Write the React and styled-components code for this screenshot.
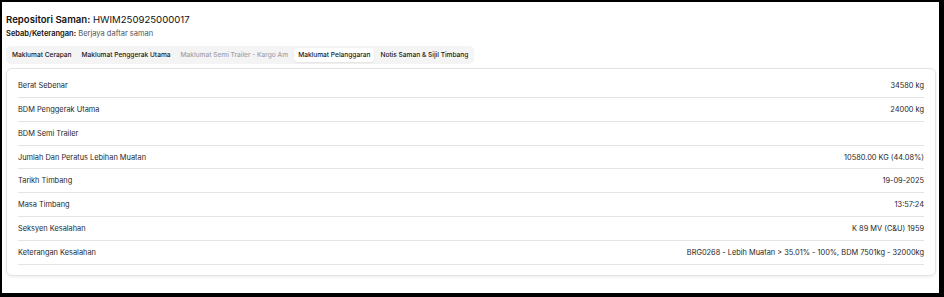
import React from "react";
import styled, { createGlobalStyle } from "styled-components";

const rows = [
  ["Berat Sebenar", "34580 kg"],
  ["BDM Penggerak Utama", "24000 kg"],
  ["BDM Semi Trailer", ""],
  ["Jumlah Dan Peratus Lebihan Muatan", "10580.00 KG (44.08%)"],
  ["Tarikh Timbang", "19-09-2025"],
  ["Masa Timbang", "13:57:24"],
  ["Seksyen Kesalahan", "K 89 MV (C&U) 1959"],
  ["Keterangan Kesalahan", "BRG0268 - Lebih Muatan > 35.01% - 100%, BDM 7501kg - 32000kg"],
];

const tabs = [
  { label: "Maklumat Cerapan" },
  { label: "Maklumat Penggerak Utama" },
  { label: "Maklumat Semi Trailer - Kargo Am", disabled: true },
  { label: "Maklumat Pelanggaran", active: true },
  { label: "Notis Saman & Sijil Timbang" },
];

export default function App() {
  return (
    <>
      <Global />
      <Frame>
        <Header>
          <Title>
            <b>Repositori Saman:</b> HWIM250925000017
          </Title>
          <Sub>
            <b>Sebab/Keterangan:</b> <span>Berjaya daftar saman</span>
          </Sub>
        </Header>
        <TabList>
          {tabs.map((t) => (
            <Tab key={t.label} $active={t.active} $disabled={t.disabled}>
              {t.label}
            </Tab>
          ))}
        </TabList>
        <Card>
          {rows.map(([k, v]) => (
            <Row key={k}>
              <span>{k}</span>
              <span>{v}</span>
            </Row>
          ))}
        </Card>
      </Frame>
    </>
  );
}

const Global = createGlobalStyle`
  html, body {
    margin: 0;
    padding: 0;
    background: #000;
  }
  body {
    font-family: Inter, "Liberation Sans", sans-serif;
    color: #18181b;
  }
`;

const Frame = styled.div`
  box-sizing: border-box;
  width: 944px;
  height: 297px;
  background: #fff;
  border-style: solid;
  border-color: #000;
  border-width: 2px 5px 4px 2px;
  padding: 11px 3px 0 4px;
  display: flex;
  flex-direction: column;
`;

const Header = styled.div`
  display: flex;
  flex-direction: column;
  gap: 3px;
  padding-bottom: 7px;
`;

const Title = styled.div`
  font-size: 9.6px;
  line-height: 13px;
  color: #111;
  b {
    font-weight: 600;
  }
`;

const Sub = styled.div`
  font-size: 7.5px;
  line-height: 10px;
  color: #111;
  b {
    font-weight: 600;
  }
  span {
    color: #52525b;
  }
`;

const TabList = styled.div`
  align-self: flex-start;
  display: flex;
  align-items: center;
  gap: 2px;
  padding: 2px 2px;
  background: #f4f4f5;
  border-radius: 5px;
`;

const Tab = styled.div`
  font-size: 6.6px;
  line-height: 14px;
  font-weight: 500;
  padding: 0 4px;
  border-radius: 4px;
  white-space: nowrap;
  color: ${(p) => (p.$disabled ? "#a1a1aa" : "#18181b")};
  background: ${(p) => (p.$active ? "#fff" : "transparent")};
  box-shadow: ${(p) => (p.$active ? "0 1px 2px rgba(0,0,0,0.08)" : "none")};
`;

const Card = styled.div`
  margin-top: 4px;
  width: 930px;
  box-sizing: border-box;
  border: 1px solid #e4e4e7;
  border-radius: 6px;
  box-shadow: 0 1px 3px rgba(0, 0, 0, 0.08);
  padding: 5px 11px 10px 11px;
`;

const Row = styled.div`
  display: flex;
  justify-content: space-between;
  align-items: center;
  height: 22.86px;
  border-bottom: 1px solid #e4e4e7;
  font-size: 7.4px;
  color: #27272a;
`;
